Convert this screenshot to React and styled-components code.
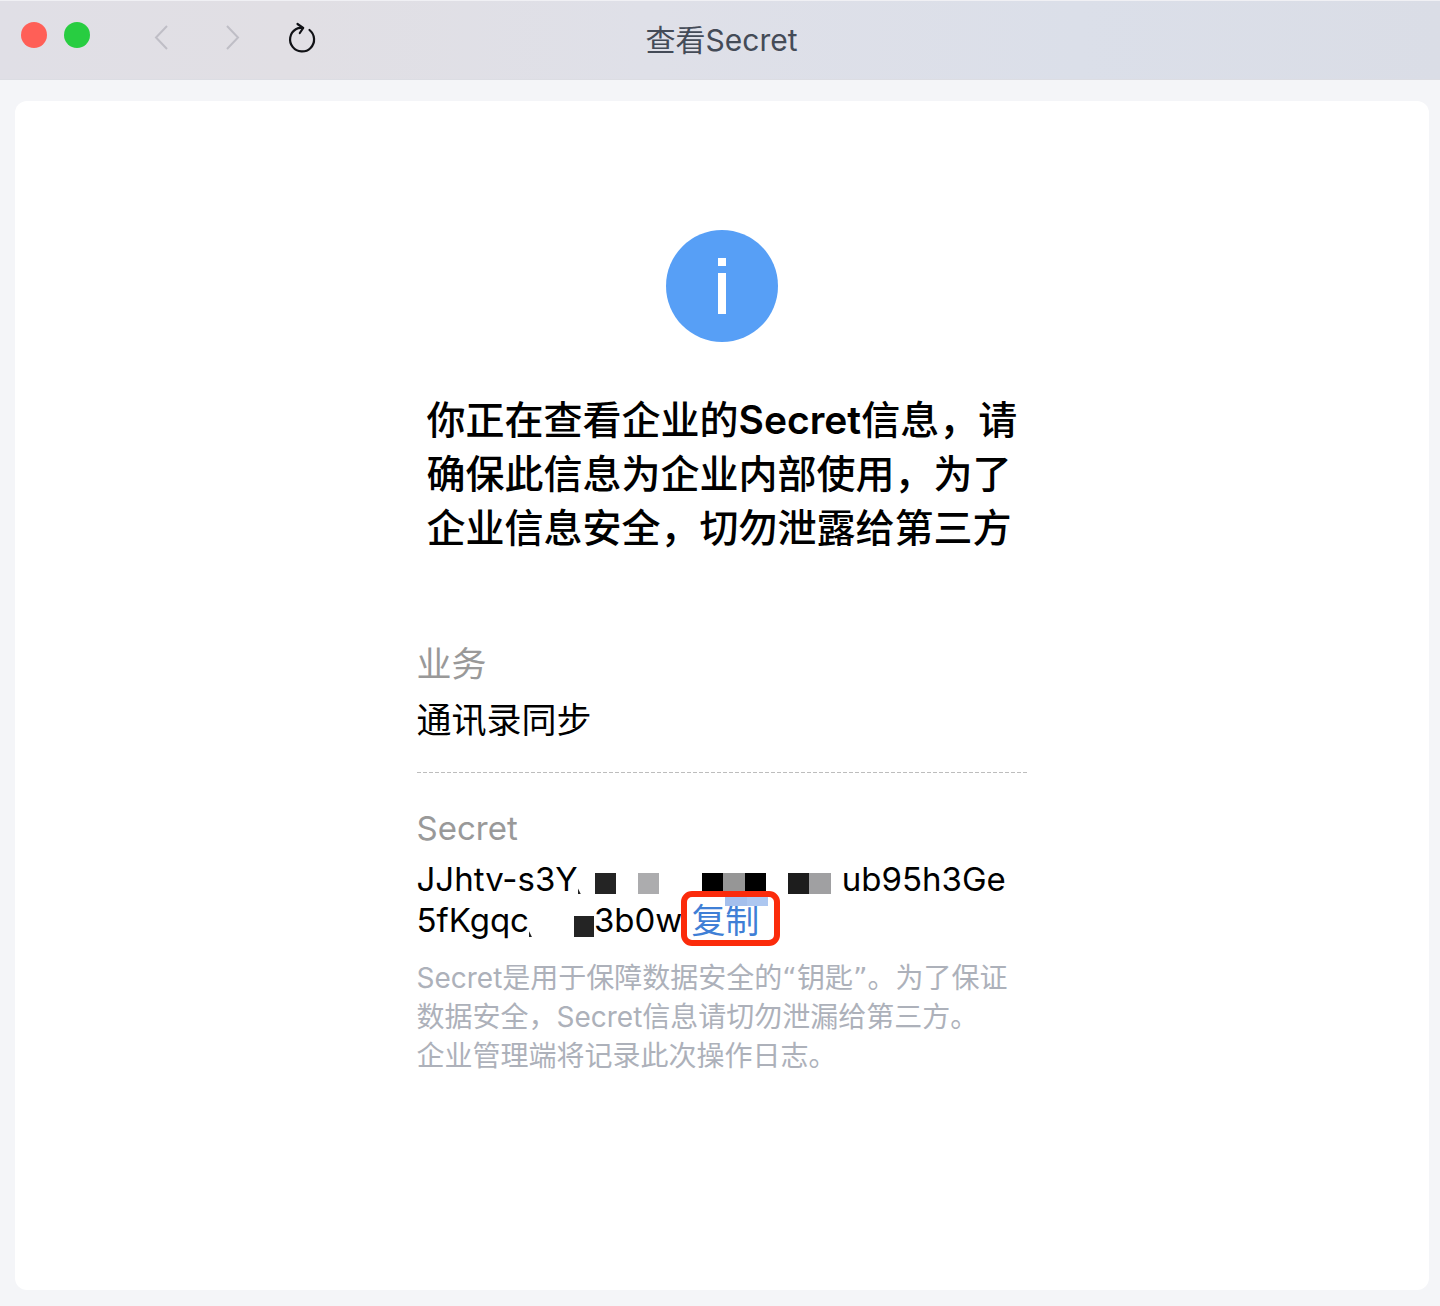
import React from "react";
import styled, { createGlobalStyle } from "styled-components";

const GlobalStyle = createGlobalStyle`
  * { box-sizing: border-box; }
  body {
    margin: 0;
    background: #f4f5f8;
    color: #000;
    font-family: Inter, "Noto Sans CJK SC", sans-serif;
  }
  h1, h2, p, dl, dt, dd { margin: 0; font-weight: 400; }
  button { font: inherit; border: 0; padding: 0; background: none; cursor: pointer; }
`;

const Window = styled.div`
  min-height: 100vh;
  display: flex;
  flex-direction: column;
`;

const TitleBar = styled.header`
  display: grid;
  grid-template-columns: 1fr auto 1fr;
  align-items: center;
  height: 80px;
  padding: 0 18px 0 21px;
  border-top: 1px solid #f0f0f4;
  border-bottom: 1px solid #dcdde3;
  background: linear-gradient(90deg, #e0dfe6 0%, #e1dfe4 20%, #dfe0e8 45%, #dbdfe9 75%, #dadde6 100%);
`;

const Controls = styled.div`
  display: flex;
  align-items: center;
`;

const Lights = styled.div`
  display: flex;
  gap: 17px;
  margin-right: 56px;
  padding-bottom: 10px;
`;

const Light = styled.button`
  width: 26px;
  height: 26px;
  border-radius: 50%;
  && { background: ${(p) => p.$color}; }
`;

const NavButtons = styled.nav`
  display: flex;
  gap: 30px;
`;

const NavButton = styled.button`
  width: 40px;
  height: 40px;
  color: ${(p) => (p.disabled ? "#bfbec6" : "#111216")};
  svg { display: block; }
`;

const Title = styled.h1`
  font-size: 30px;
  line-height: 40px;
  color: #444b57;
`;

const Card = styled.main`
  flex: 1;
  display: flex;
  flex-direction: column;
  align-items: center;
  margin: 21px 11px 16px 15px;
  padding: 129px 24px 40px;
  border-radius: 12px;
  background: #fff;
`;

const Content = styled.div`
  width: 100%;
  max-width: 611px;
`;

const Badge = styled.svg`
  display: block;
  width: 112px;
  height: 112px;
  margin: 0 auto 51px;
`;

const Headline = styled.h2`
  padding-left: 10px;
  margin-bottom: 85px;
  font-size: 39px;
  line-height: 54px;
  font-weight: 500;
  white-space: nowrap;
`;

const Strong = styled.span`
  font-weight: 600;
`;

const Label = styled.dt`
  font-size: ${(p) => (p.$latin ? 33 : 35)}px;
  line-height: 48px;
  color: #999;
`;

const Value = styled.dd`
  margin-top: 8px;
  padding-bottom: 28px;
  font-size: 35px;
  line-height: 48px;
`;

const Divider = styled.div`
  height: 1px;
  margin-bottom: 31px;
  background: repeating-linear-gradient(90deg, #bdbdbd 0 4px, transparent 4px 6px);
`;

const Secret = styled.dd`
  margin-top: 7px;
  font-size: 33px;
  line-height: 41px;
`;

const SecretLine = styled.div`
  display: flex;
  white-space: pre;
`;

const Mosaic = styled.span`
  display: flex;
  flex: none;
  align-items: flex-end;
  height: ${(p) => (p.$low ? 37 : 35)}px;
  width: ${(p) => p.$width}px;
`;

const Cell = styled.span`
  flex: 1;
  height: 21px;
  background: ${(p) => p.$color};
`;

const Tick = styled.span`
  width: 3px;
  height: 6px;
  background: #222;
  clip-path: polygon(0 0, 100% 100%, 0 100%);
`;

const CopyButton = styled.button`
  && {
    position: relative;
    margin-left: 9px;
    font-size: 34px;
    color: #3f7fd6;
  }
`;

const Highlight = styled.span`
  position: absolute;
  inset: -9px -21px -5px -10px;
  border: 6px solid #fb2b0b;
  border-radius: 11px;
`;

const Smudge = styled.span`
  position: absolute;
  top: -3px;
  left: 34px;
  width: 43px;
  height: 9px;
  background: linear-gradient(90deg, #a4bfec 50%, #adc7f0 50%);
`;

const Note = styled.p`
  margin-top: 18px;
  font-size: 28px;
  line-height: 39px;
  color: #adb1ba;
  white-space: nowrap;
`;

const Quote = styled.span`
  font-family: "DejaVu Sans", sans-serif;
`;

const maskCells = [
  "#242424", "transparent", "#acacae", "transparent", "transparent",
  "#000", "#969696", "#000", "transparent", "#1d1d1d", "#a0a0a2",
];

export default function App() {
  return (
    <>
      <GlobalStyle />
      <Window>
        <TitleBar>
          <Controls>
            <Lights>
              <Light $color="#ff5f57" aria-label="关闭" />
              <Light $color="#28cd41" aria-label="缩放" />
            </Lights>
            <NavButtons>
              <NavButton disabled aria-label="后退">
                <svg width="40" height="40" viewBox="0 0 40 40" fill="none" stroke="currentColor" strokeWidth="2">
                  <path d="M21 6 10 17.500l11 11.500" />
                </svg>
              </NavButton>
              <NavButton disabled aria-label="前进">
                <svg width="40" height="40" viewBox="0 0 40 40" fill="none" stroke="currentColor" strokeWidth="2">
                  <path d="M11 6l11 11.500-11 11.500" />
                </svg>
              </NavButton>
              <NavButton aria-label="刷新">
                <svg width="40" height="40" viewBox="0 0 40 40" fill="none" stroke="currentColor" strokeWidth="2.2" strokeLinecap="round" strokeLinejoin="round">
                  <path d="M23.500 10A12 12 0 1 1 9.800 9.200Q12.500 7.600 17 8" />
                  <path d="M11.500 4 17.200 8l-3.400 5" />
                </svg>
              </NavButton>
            </NavButtons>
          </Controls>
          <Title>查看Secret</Title>
        </TitleBar>
        <Card>
          <Content>
            <Badge viewBox="0 0 112 112" aria-hidden="true">
              <circle cx="56" cy="56" r="56" fill="#579ff6" />
              <path d="M52 28h8v8h-8zM52 43h8v41h-8z" fill="#fff" />
            </Badge>
            <Headline>
              你正在查看企业的<Strong>Secret</Strong>信息，请<br />
              确保此信息为企业内部使用，为了<br />
              企业信息安全，切勿泄露给第三方
            </Headline>
            <dl>
              <Label>业务</Label>
              <Value>通讯录同步</Value>
            </dl>
            <Divider />
            <dl>
              <Label $latin>Secret</Label>
              <Secret>
                <SecretLine>
                  JJhtv-s3Y
                  <Mosaic $width={17}><Tick /></Mosaic>
                  <Mosaic $width={236}>
                    {maskCells.map((color, i) => <Cell key={i} $color={color} />)}
                  </Mosaic>
                  <Mosaic $width={11} />
                  ub95h3Ge
                </SecretLine>
                <SecretLine>
                  5fKgqc
                  <Mosaic $low $width={45}><Tick /></Mosaic>
                  <Mosaic $low $width={20}><Cell $color="#242424" /></Mosaic>
                  3b0w
                  <CopyButton>
                    复制
                    <Smudge />
                    <Highlight />
                  </CopyButton>
                </SecretLine>
              </Secret>
            </dl>
            <Note>
              Secret是用于保障数据安全的<Quote>“</Quote>钥匙<Quote>”</Quote>。为了保证<br />
              数据安全，Secret信息请切勿泄漏给第三方。<br />
              企业管理端将记录此次操作日志。
            </Note>
          </Content>
        </Card>
      </Window>
    </>
  );
}
